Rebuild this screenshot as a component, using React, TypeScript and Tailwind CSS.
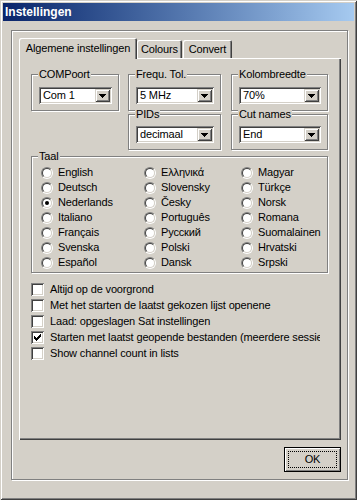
import React from 'react';

const raised =
  'shadow-[inset_1px_1px_0_#d4d0c8,inset_-1px_-1px_0_#404040,inset_2px_2px_0_#fff,inset_-2px_-2px_0_#808080]';
const sunken =
  'shadow-[inset_1px_1px_0_#808080,inset_-1px_-1px_0_#fff,inset_2px_2px_0_#404040,inset_-2px_-2px_0_#d4d0c8]';
const etched = 'border border-[#808080] shadow-[inset_1px_1px_0_#fff,1px_1px_0_#fff]';

function Combo({ value }: { value: string }) {
  return (
    <div className={`flex h-[17px] w-full bg-white p-[2px] ${sunken}`}>
      <div className="flex-1 overflow-hidden whitespace-nowrap pl-[2px] leading-[13px]">{value}</div>
      <div className={`flex w-[15px] items-center justify-center bg-[#d4d0c8] ${raised}`}>
        <svg width="7" height="4" shapeRendering="crispEdges">
          <rect x="0" y="0" width="7" height="1" fill="#000" />
          <rect x="1" y="1" width="5" height="1" fill="#000" />
          <rect x="2" y="2" width="3" height="1" fill="#000" />
          <rect x="3" y="3" width="1" height="1" fill="#000" />
        </svg>
      </div>
    </div>
  );
}

function Group({ label, className, children }: { label: string; className: string; children?: React.ReactNode }) {
  return (
    <div className={`relative ${etched} ${className}`}>
      <span className="absolute left-[6px] top-[-8px] bg-[#d4d0c8] px-[1px] leading-[14px]">{label}</span>
      {children}
    </div>
  );
}

function Radio({ label, checked }: { label: string; checked?: boolean }) {
  return (
    <div className="flex h-[15px] items-center gap-[5px] whitespace-nowrap">
      <span className="relative h-[12px] w-[12px] shrink-0 rounded-full border border-b-white border-l-[#808080] border-r-white border-t-[#808080]">
        <span className="absolute inset-0 rounded-full border border-b-[#d4d0c8] border-l-[#404040] border-r-[#d4d0c8] border-t-[#404040] bg-white" />
        {checked && <span className="absolute left-[3px] top-[3px] h-[4px] w-[4px] rounded-full bg-black" />}
      </span>
      <span>{label}</span>
    </div>
  );
}

function Check({ label, checked }: { label: string; checked?: boolean }) {
  return (
    <div className="flex h-[16px] items-center gap-[6px] whitespace-nowrap">
      <span className={`relative h-[13px] w-[13px] shrink-0 bg-white ${sunken}`}>
        {checked && (
          <svg className="absolute left-[3px] top-[3px]" width="7" height="7" shapeRendering="crispEdges">
            {[2, 3, 4, 3, 2, 1, 0].map((y, x) => (
              <rect key={x} x={x} y={y} width="1" height="3" fill="#000" />
            ))}
          </svg>
        )}
      </span>
      <span>{label}</span>
    </div>
  );
}

const col1 = ['English', 'Deutsch', 'Nederlands', 'Italiano', 'Français', 'Svenska', 'Español'];
const col2 = ['Ελληνικά', 'Slovensky', 'Česky', 'Português', 'Русский', 'Polski', 'Dansk'];
const col3 = ['Magyar', 'Türkçe', 'Norsk', 'Romana', 'Suomalainen', 'Hrvatski', 'Srpski'];

export default function App() {
  return (
    <div className="h-[500px] w-[357px] bg-[#d4d0c8] p-[3px] font-['Liberation_Sans',Arial,sans-serif] text-[11px] tracking-[-0.15px] text-black shadow-[inset_1px_1px_0_#d4d0c8,inset_-1px_-1px_0_#404040,inset_2px_2px_0_#fff,inset_-2px_-2px_0_#808080]">
      <div className="flex h-[18px] items-center bg-linear-to-r from-[#0a246a] to-[#a6caf0] pl-[2px] text-[12px] font-bold tracking-normal text-white">
        Instellingen
      </div>

      <div className={`ml-[8px] mt-[9px] h-[450px] w-[337px] pl-[7px] pt-[7px] ${etched}`}>
        {/* tabs */}
        <div className="flex items-end">
          <div className="relative z-10 -mb-px flex h-[21px] w-[118px] items-center justify-center rounded-t-[2px] bg-[#d4d0c8] shadow-[inset_1px_1px_0_#fff,inset_-1px_0_0_#404040,inset_-2px_0_0_#808080]">
            Algemene instellingen
          </div>
          <div className="flex h-[18px] w-[45px] items-center justify-center rounded-t-[2px] shadow-[inset_1px_1px_0_#fff,inset_-1px_0_0_#404040,inset_-2px_0_0_#808080]">
            Colours
          </div>
          <div className="ml-px flex h-[18px] w-[49px] items-center justify-center rounded-t-[2px] shadow-[inset_1px_1px_0_#fff,inset_-1px_0_0_#404040,inset_-2px_0_0_#808080]">
            Convert
          </div>
        </div>

        {/* panel */}
        <div className="h-[382px] w-[322px] pl-[12px] pt-[16px] shadow-[inset_1px_1px_0_#fff,inset_-1px_-1px_0_#404040,inset_-2px_-2px_0_#808080]">
          <div className="flex">
            <Group label="COMPoort" className="h-[37px] w-[88px] pl-[7px] pr-[6px] pt-[12px]">
              <Combo value="Com 1" />
            </Group>
            <div className="ml-[9px] flex w-[93px] flex-col gap-[3px]">
              <Group label="Frequ. Tol." className="h-[37px] w-full pl-[7px] pr-[6px] pt-[12px]">
                <Combo value="5 MHz" />
              </Group>
              <Group label="PIDs" className="h-[36px] w-full pl-[7px] pr-[6px] pt-[11px]">
                <Combo value="decimaal" />
              </Group>
            </div>
            <div className="ml-[10px] flex w-[97px] flex-col gap-[3px]">
              <Group label="Kolombreedte" className="h-[37px] w-full pl-[7px] pr-[6px] pt-[12px]">
                <Combo value="70%" />
              </Group>
              <Group label="Cut names" className="h-[36px] w-full pl-[7px] pr-[6px] pt-[11px]">
                <Combo value="End" />
              </Group>
            </div>
          </div>

          <Group label="Taal" className="mt-[6px] h-[117px] w-[297px] pl-[9px] pt-[8px]">
            <div className="grid grid-cols-[103px_97px_1fr]">
              <div>
                {col1.map((l) => (
                  <Radio key={l} label={l} checked={l === 'Nederlands'} />
                ))}
              </div>
              <div>
                {col2.map((l) => (
                  <Radio key={l} label={l} />
                ))}
              </div>
              <div>
                {col3.map((l) => (
                  <Radio key={l} label={l} />
                ))}
              </div>
            </div>
          </Group>

          <div className="mt-[8px] w-[289px] overflow-hidden">
            <Check label="Altijd op de voorgrond" />
            <Check label="Met het starten de laatst gekozen lijst openene" />
            <Check label="Laad: opgeslagen Sat instellingen" />
            <Check label="Starten met laatst geopende bestanden (meerdere sessies)" checked />
            <Check label="Show channel count in lists" />
          </div>
        </div>

        <div className="flex w-[322px] justify-end">
          <div className="relative mt-[7px] flex h-[25px] w-[57px] items-center justify-center border border-black bg-[#d4d0c8] shadow-[inset_1px_1px_0_#fff,inset_-1px_-1px_0_#808080]">
            <span className="absolute inset-[3px] border border-dotted border-black" />
            OK
          </div>
        </div>
      </div>
    </div>
  );
}
